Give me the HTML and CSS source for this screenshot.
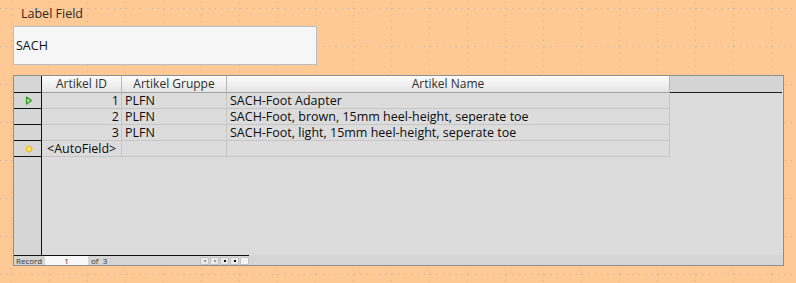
FILE: index.html
```html
<!DOCTYPE html>
<html>
<head>
<meta charset="utf-8">
<link rel="stylesheet" href="styles.css">
</head>
<body>
<div class="page">
  <div class="label">Label Field</div>
  <div class="textbox">SACH</div>
  <div class="grid">
    <div class="table">
      <div class="hc corner"></div>
      <div class="hc">Artikel ID</div>
      <div class="hc">Artikel Gruppe</div>
      <div class="hc">Artikel Name</div>
      <div class="hc empty"></div>

      <div class="rh"><svg width="8" height="9" viewBox="0 0 8 9"><polygon points="1.5,1 6.5,4.5 1.5,8" fill="#bfe39a" stroke="#2e9a22" stroke-width="1.2" stroke-linejoin="round"/></svg></div>
      <div class="c num">1</div>
      <div class="c">PLFN</div>
      <div class="c">SACH-Foot Adapter</div>
      <div class="c rest"></div>

      <div class="rh"></div>
      <div class="c num">2</div>
      <div class="c">PLFN</div>
      <div class="c">SACH-Foot, brown, 15mm heel-height, seperate toe</div>
      <div class="c rest"></div>

      <div class="rh"></div>
      <div class="c num">3</div>
      <div class="c">PLFN</div>
      <div class="c">SACH-Foot, light, 15mm heel-height, seperate toe</div>
      <div class="c rest"></div>

      <div class="rh"><svg width="8" height="8" viewBox="0 0 8 8"><g stroke="#f5c400" stroke-width="1"><line x1="4" y1="0" x2="4" y2="8"/><line x1="0" y1="4" x2="8" y2="4"/><line x1="1.2" y1="1.2" x2="6.8" y2="6.8"/><line x1="6.8" y1="1.2" x2="1.2" y2="6.8"/></g><circle cx="4" cy="4" r="2.4" fill="#fff070" stroke="#f0a000" stroke-width="0.8"/></svg></div>
      <div class="c auto">&lt;AutoField&gt;</div>
      <div class="c"></div>
      <div class="c"></div>
      <div class="c rest"></div>

      <div class="rh filler"></div>
      <div class="fill"></div>
    </div>
    <div class="nav">
      <div class="navleft">
        <span class="rec">Record</span>
        <span class="recbox">1</span>
        <span class="of">of&nbsp; 3</span>
        <span class="btns">
          <span class="b dim"></span>
          <span class="b dim"></span>
          <span class="b on"></span>
          <span class="b on"></span>
          <span class="b"></span>
        </span>
      </div>
    </div>
  </div>
</div>
</body>
</html>
```

FILE: styles.css
```css
* { box-sizing: border-box; }
html, body { margin: 0; padding: 0; }
body {
  width: 796px;
  height: 283px;
  overflow: hidden;
  font-family: "Open Sans", "DejaVu Sans", sans-serif;
  font-variant-ligatures: none;
  background-color: #fec995;
  background-image:
    radial-gradient(circle at 0.5px 0.5px, #a4b3c6 0.75px, transparent 0.8px),
    radial-gradient(circle at 0.5px 0.5px, #a4b3c6 0.75px, transparent 0.8px);
  background-size: 6.3333px 38px, 38px 6.3333px;
  background-position: 0 8px, 11px 2px;
}
.page {
  padding: 6px 12px 0 13px;
}
.label {
  margin-left: 8px;
  font-size: 12.5px;
  line-height: 16px;
  height: 20px;
  color: #2a2a2a;
}
.textbox {
  width: 304px;
  height: 39px;
  border: 1px solid #b7bec7;
  background: #f6f6f6;
  font-size: 12.5px;
  color: #111;
  display: flex;
  align-items: center;
  padding-left: 2px;
}
.grid {
  margin-top: 10px;
  width: 771px;
  height: 191px;
  border: 1px solid #8e8e8e;
  background: #dcdcdc;
  display: flex;
  flex-direction: column;
}
.table {
  flex: 1;
  display: grid;
  grid-template-columns: 28px 80px 105px 443px 1fr;
  grid-template-rows: 17px 16px 16px 16px 16px 1fr;
  font-size: 12.5px;
  color: #0c0c0c;
}
.hc {
  border-bottom: 1px solid #a0a0a0;
  border-right: 1px solid #b8b8b8;
  background: linear-gradient(#fdfdfd, #e4e4e4);
  color: #2e2e2e;
  font-size: 12px;
  text-align: center;
  line-height: 16px;
  white-space: nowrap;
}
.hc.corner {
  background: #d6d6d6;
  border-bottom: 1px solid #111;
  border-right: 1px solid #111;
}
.hc.empty {
  background: #d4d4d4;
  border-right: none;
  border-bottom: 1px solid #1e1e1e;
  margin-right: 1px;
}
.rh {
  background: #d6d6d6;
  border-right: 1px solid #111;
  border-bottom: 1px solid #111;
  display: flex;
  align-items: center;
  justify-content: center;
  padding-left: 3px;
}
.rh.filler { border-bottom: none; }
.c {
  border-right: 1px solid #c6c6c6;
  border-bottom: 1px solid #c6c6c6;
  line-height: 15px;
  padding-left: 2px;
  white-space: nowrap;
  overflow: hidden;
}
.c.num { text-align: right; padding-right: 2px; }
.c + .c:not(.num) { padding-left: 3px; }
.c.auto { padding-left: 5px; }
.c.rest { border: none; }
.fill { grid-column: 2 / 6; }
.nav {
  height: 10px;
  background: #d5d5d5;
}
.navleft {
  width: 235px;
  height: 10px;
  border-top: 1px solid #111;
  display: flex;
  align-items: center;
  font-size: 8px;
  color: #333;
}
.rec { width: 31px; padding-left: 2px; line-height: 9px; }
.recbox {
  width: 43px;
  height: 9px;
  background: #f8f8f8;
  text-align: center;
  line-height: 9px;
}
.of { padding-left: 3px; line-height: 9px; flex: 1; }
.btns { display: flex; gap: 1px; margin-right: 0; }
.b {
  width: 9px;
  height: 8px;
  border: 1px solid #c4c4c4;
  border-radius: 1px;
  background: #e9e9e9;
  display: flex;
  align-items: center;
  justify-content: center;
}
.b.dim::after, .b.on::after {
  content: "";
  width: 2px;
  height: 2px;
  background: #9a9a9a;
}
.b.on::after { background: #111; }
.b:last-child { background: #f4f4f4; }
```
